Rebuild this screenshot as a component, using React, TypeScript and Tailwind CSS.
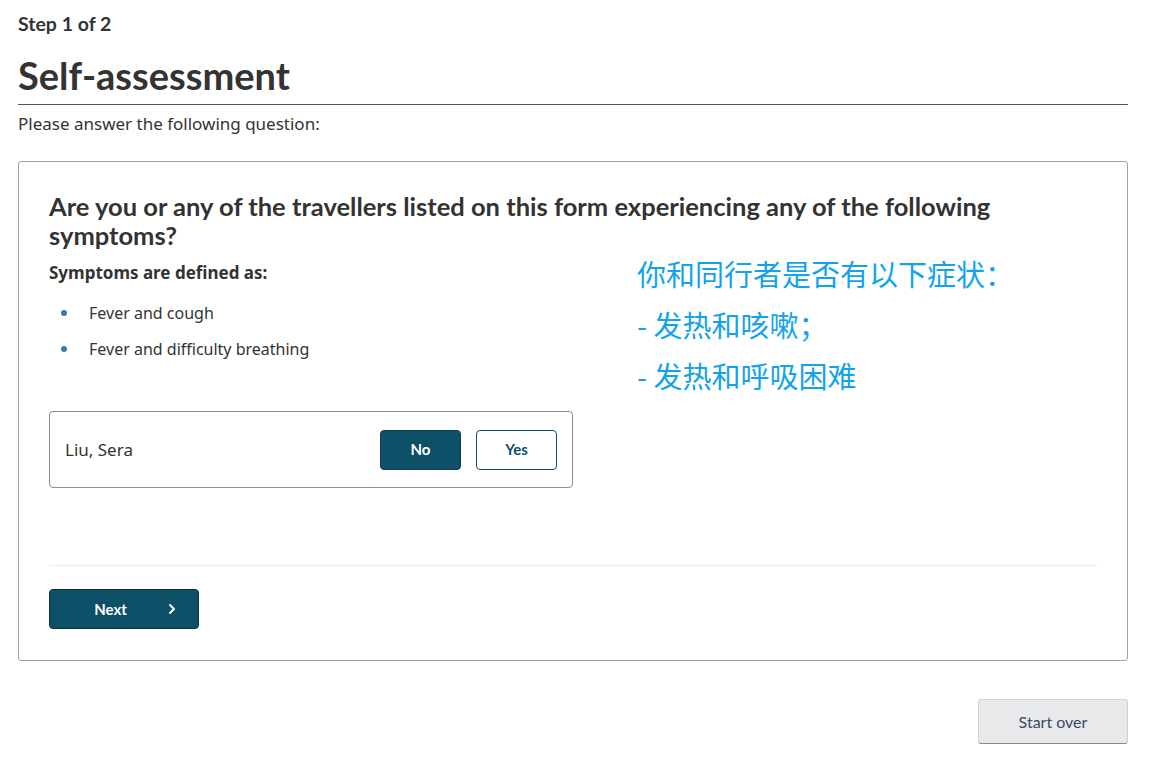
import { ChevronRight } from "lucide-react";

const symptoms = ["Fever and cough", "Fever and difficulty breathing"];

export default function App() {
  return (
    <div className="min-h-screen bg-white text-[#333] font-['Noto_Sans',sans-serif]">
      <div className="w-[1110px] ml-[18px] pt-[12px]">
        <div className="font-['Lato',sans-serif] font-bold text-[19.5px] leading-[24px]">Step 1 of 2</div>
        <h1 className="font-['Lato',sans-serif] font-bold text-[38px] leading-[46px] mt-[16px] pb-[6px] border-b border-[#555]">
          Self-assessment
        </h1>
        <p className="text-[17px] leading-[22px] mt-[8px]">Please answer the following question:</p>

        <div className="mt-[26px] border border-[#a3a3a3] rounded-[3px] px-[30px] pt-[30px] pb-[31px]">
          <h2 className="font-['Lato',sans-serif] font-bold text-[25.5px] leading-[29px] text-[#333]">
            Are you or any of the travellers listed on this form experiencing any of the following symptoms?
          </h2>

          <div className="flex gap-[64px]">
            <div className="w-[524px]">
              <div className="font-bold text-[17px] leading-[22px] mt-[12px]">Symptoms are defined as:</div>
              <ul className="mt-[18px] flex flex-col gap-[14px]">
                {symptoms.map((s) => (
                  <li key={s} className="flex items-center text-[16px] leading-[22px]">
                    <span className="w-[6px] h-[6px] rounded-full bg-[#2f7fa6] ml-[12px] mr-[22px]" />
                    {s}
                  </li>
                ))}
              </ul>

              <div className="mt-[51px] border border-[#8c8c8c] rounded-[4px] h-[77px] flex items-center pl-[15px] pr-[15px]">
                <span className="text-[17px] flex-1">Liu, Sera</span>
                <button className="w-[81px] h-[40px] rounded-[4px] bg-[#0d5068] border border-[#0a3d50] text-white font-['Lato',sans-serif] font-bold text-[15px]">
                  No
                </button>
                <button className="ml-[15px] w-[81px] h-[40px] rounded-[4px] bg-white border border-[#0d5068] text-[#0d5068] font-['Lato',sans-serif] font-bold text-[15px]">
                  Yes
                </button>
              </div>
            </div>

            <div className="-mt-[2px] text-[#12a3ec] text-[29px] leading-[51px] font-['Noto_Sans_CJK_SC',sans-serif]">
              <div>你和同行者是否有以下症状：</div>
              <div>- 发热和咳嗽；</div>
              <div>- 发热和呼吸困难</div>
            </div>
          </div>

          <div className="mt-[77px] border-t border-[#ececec]" />

          <button className="mt-[23px] w-[150px] h-[40px] rounded-[4px] bg-[#0d5068] border border-[#082f3d] text-white font-['Lato',sans-serif] font-bold text-[15px] flex items-center">
            <span className="flex-1 text-center pl-[7px]">Next</span>
            <ChevronRight size={16} strokeWidth={3} className="mr-[18px]" />
          </button>
        </div>

        <div className="flex justify-end mt-[38px]">
          <button className="w-[150px] h-[45px] rounded-[3px] bg-[#e8e9eb] border border-[#cfd0d2] border-b-[#8a8a8a] text-[#3b4a66] font-['Lato',sans-serif] text-[16px]">
            Start over
          </button>
        </div>
      </div>
    </div>
  );
}
